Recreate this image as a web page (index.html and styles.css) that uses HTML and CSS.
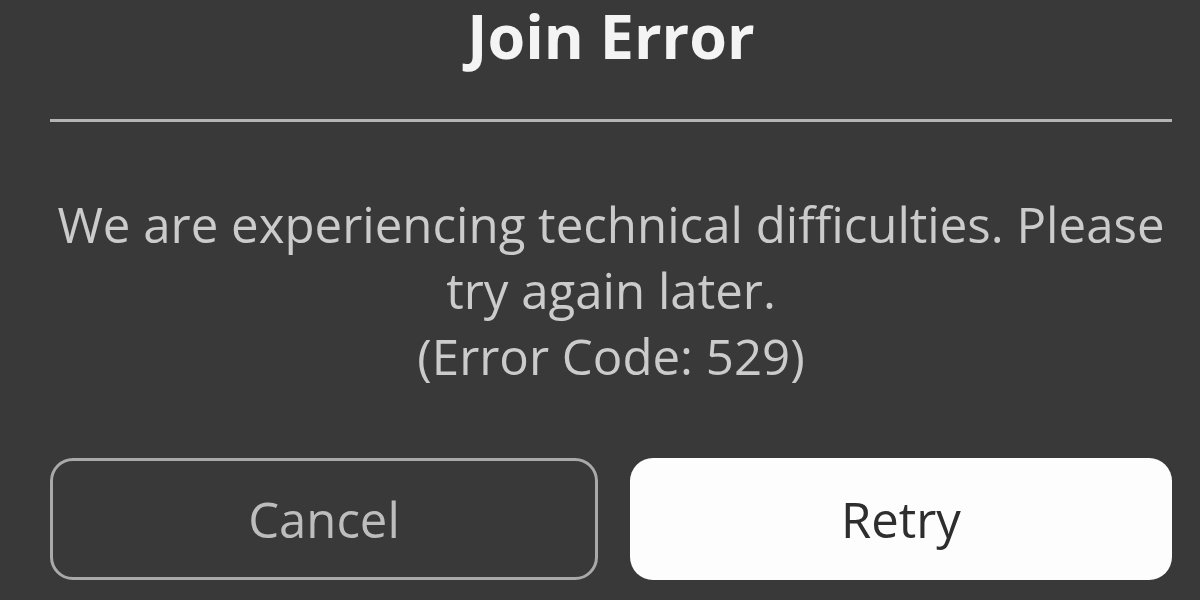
FILE: index.html
```html
<!DOCTYPE html>
<html>
<head>
<meta charset="utf-8">
<link rel="stylesheet" href="styles.css">
</head>
<body>
<div class="dialog">
  <h1 class="title">Join Error</h1>
  <div class="divider"></div>
  <p class="message">We are experiencing technical difficulties. Please<br>try again later.<br>(Error Code: 529)</p>
  <div class="actions">
    <button class="btn btn-cancel">Cancel</button>
    <button class="btn btn-retry">Retry</button>
  </div>
</div>
</body>
</html>
```
FILE: styles.css
```css
html, body {
  margin: 0;
  padding: 0;
  background: #393939;
  width: 1200px;
  height: 600px;
  overflow: hidden;
}
.dialog {
  font-family: "Open Sans", "Noto Sans", sans-serif;
  padding: 0 28px 0 50px;
  display: flex;
  flex-direction: column;
}
.title {
  margin: 0;
  height: 72px;
  line-height: 72px;
  font-size: 61px;
  font-weight: 700;
  color: #f4f4f4;
  text-align: center;
}
.divider {
  margin-top: 47px;
  height: 3px;
  background: #b4b4b4;
}
.message {
  margin: 69px 0 0;
  font-size: 49.2px;
  line-height: 66px;
  color: #cbcbcb;
  text-align: center;
  white-space: nowrap;
}
.actions {
  margin-top: 69px;
  display: flex;
  gap: 32px;
}
.btn {
  flex: 1;
  height: 122px;
  border-radius: 23px;
  font-family: "Open Sans", "Noto Sans", sans-serif;
  font-size: 49px;
  padding: 0;
}
.btn-cancel {
  background: transparent;
  border: 3px solid #a9a9a9;
  color: #bdbdbd;
}
.btn-retry {
  background: #fdfdfd;
  border: none;
  color: #2e2e2e;
}
```
